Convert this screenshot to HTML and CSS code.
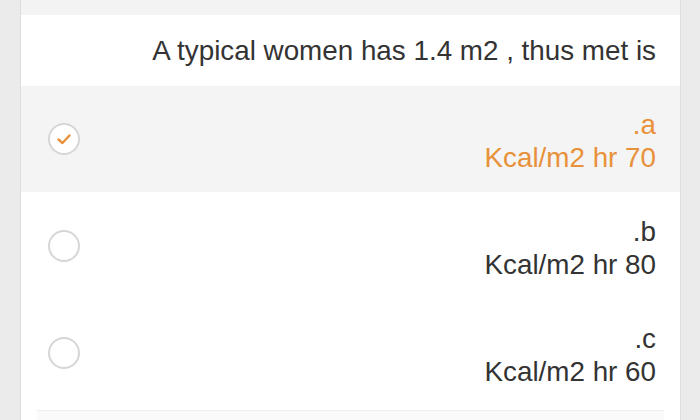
FILE: index.html
```html
<!DOCTYPE html>
<html>
<head>
<meta charset="utf-8">
<link rel="stylesheet" href="styles.css">
</head>
<body>
<div class="card">
  <div class="topband"></div>
  <div class="question">A typical women has 1.4 m2 , thus met is</div>
  <div class="option selected">
    <span class="radio checked">
      <svg width="20" height="20" viewBox="0 0 20 20"><path d="M4.5 10.5 L8.5 14 L15.5 6.5" fill="none" stroke="#e8913a" stroke-width="2.4" stroke-linecap="round" stroke-linejoin="round"/></svg>
    </span>
    <div class="label"><div>.a</div><div>Kcal/m2 hr 70</div></div>
  </div>
  <div class="option">
    <span class="radio"></span>
    <div class="label"><div>.b</div><div>Kcal/m2 hr 80</div></div>
  </div>
  <div class="option">
    <span class="radio"></span>
    <div class="label"><div>.c</div><div>Kcal/m2 hr 60</div></div>
  </div>
  <div class="nextband"></div>
</div>
</body>
</html>
```
FILE: styles.css
```css
html, body {
  margin: 0;
  padding: 0;
  background: #ebebeb;
  height: 420px;
  overflow: hidden;
}
body {
  font-family: "Liberation Sans", Arial, sans-serif;
  color: #333;
}
.card {
  margin-left: 20px;
  width: 661px;
  height: 420px;
  background: #fff;
  border-left: 1px solid #dedede;
  border-right: 1px solid #dedede;
  box-sizing: border-box;
  display: flex;
  flex-direction: column;
}
.topband {
  height: 15px;
  flex: none;
  background: #f3f3f3;
}
.question {
  height: 71px;
  flex: none;
  display: flex;
  align-items: center;
  justify-content: flex-end;
  padding-right: 24px;
  font-size: 27.8px;
}
.option {
  height: 107px;
  flex: none;
  display: flex;
  align-items: center;
  justify-content: space-between;
  padding: 0 24px 0 27px;
}
.option.selected {
  height: 106px;
  background: #f4f4f4;
  color: #e8913a;
}
.radio {
  width: 32px;
  height: 32px;
  box-sizing: border-box;
  border: 2px solid #d6d6d6;
  border-radius: 50%;
  background: #fff;
  display: flex;
  align-items: center;
  justify-content: center;
}
.label {
  text-align: right;
  font-size: 27.8px;
  line-height: 33px;
  padding-top: 4px;
}
.nextband {
  margin: 4px 16px 0 16px;
  flex: 1;
  background: #fafafa;
  border-top: 1px solid #eeeeee;
}
```
